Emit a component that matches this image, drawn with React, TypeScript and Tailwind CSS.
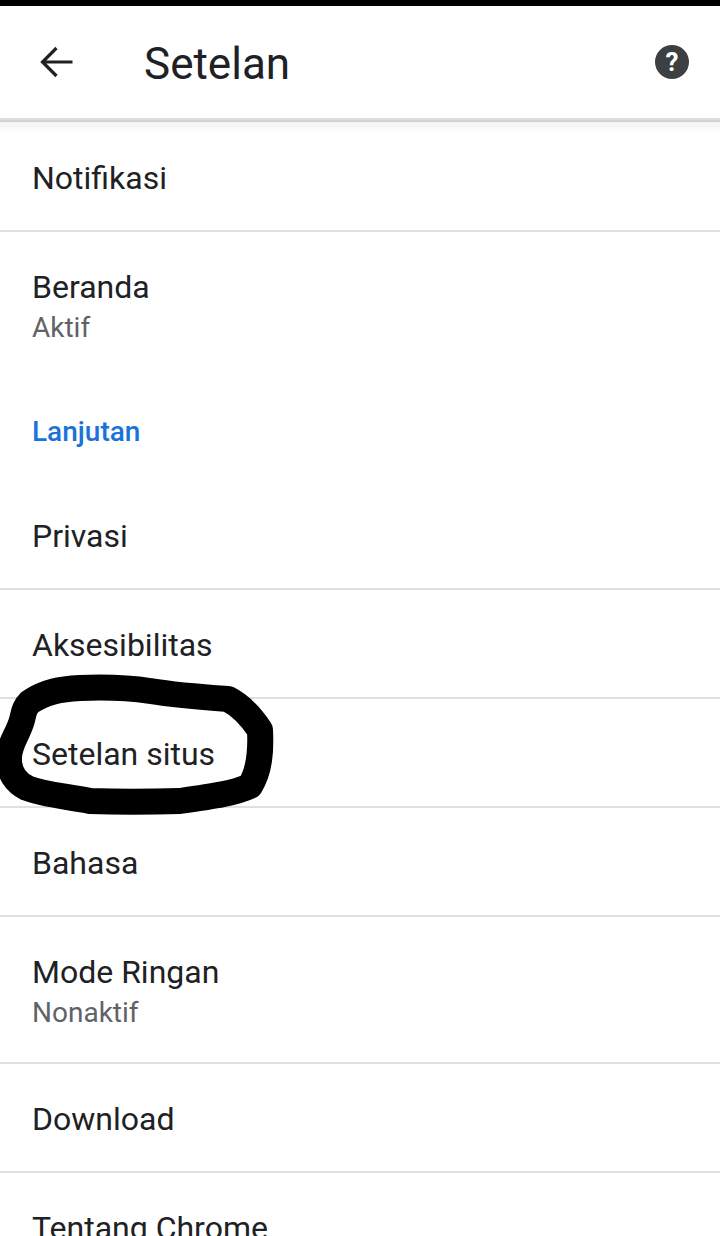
const Row = ({ title, sub, last, plain }: { title: string; sub?: string; last?: boolean; plain?: boolean }) => (
    <div
        className={`px-8 pt-[35px] ${sub ? 'h-[147px]' : 'h-[109px]'} ${
            last || plain ? '' : 'border-b-2 border-[#e0e0e0]'
        }`}
    >
        <div className="text-[32px] leading-[40px] text-[#202124]">{title}</div>
        {sub && <div className="mt-px text-[28px] leading-[40px] text-[#5f6368]">{sub}</div>}
    </div>
);

export default function App() {
    return (
        <div className="relative h-[1236px] w-[720px] overflow-hidden bg-white font-['Roboto',sans-serif]">
            <div className="h-[6px] bg-black" />

            {/* Header */}
            <div className="flex h-[112px] items-center justify-between pr-[31px] pl-[38px]">
                <div className="flex items-center">
                    <svg viewBox="0 0 36 34" className="h-[34px] w-[36px]" fill="none" stroke="#202124" strokeWidth="3.2">
                        <path d="M34.5 17 H4.5 M18.5 3 L4.5 17 L18.5 31" />
                    </svg>
                    <div className="mt-[3px] ml-[70px] text-[44px] leading-[56px] text-[#202124]">Setelan</div>
                </div>
                <svg viewBox="0 0 34 34" className="h-[34px] w-[34px]">
                    <circle cx="17" cy="17" r="17" fill="#3c4043" />
                    <text x="17" y="26" textAnchor="middle" fontSize="26" fontWeight="700" fill="#fff" fontFamily="Roboto, sans-serif">
                        ?
                    </text>
                </svg>
            </div>
            <div className="h-[4px] bg-gradient-to-b from-[#e4e4e4] to-[#cdcdcd]" />
            <div className="h-[12px] bg-gradient-to-b from-[#f3f3f3] to-white" />

            {/* List */}
            <div className="-mt-[11px]">
                <Row title="Notifikasi" />
                <Row title="Beranda" sub="Aktif" plain />
                <div className="flex h-[102px] items-center px-8 pt-[3px] text-[28px] font-medium text-[#1a73d8]">Lanjutan</div>
                <Row title="Privasi" />
                <Row title="Aksesibilitas" />
                <Row title="Setelan situs" />
                <Row title="Bahasa" />
                <Row title="Mode Ringan" sub="Nonaktif" />
                <Row title="Download" />
                <Row title="Tentang Chrome" last />
            </div>

            {/* Coretan tangan */}
            <svg viewBox="0 0 720 1236" className="pointer-events-none absolute inset-0 h-[1236px] w-[720px]">
                <path
                    d="M9 760 C8 745 18 735 22 720 C24 712 24 708 30 702 C45 692 60 689 80 688 C105 687 130 688 150 691 C175 695 200 697 228 699 C242 706 252 718 260 730 C261 750 260 770 250 786 C235 793 215 796 180 801 C150 802 115 802 90 801 C65 796 45 795 27 788 C15 782 9 772 9 760 Z"
                    fill="none"
                    stroke="#000"
                    strokeWidth="26"
                    strokeLinejoin="round"
                />
            </svg>
        </div>
    );
}
